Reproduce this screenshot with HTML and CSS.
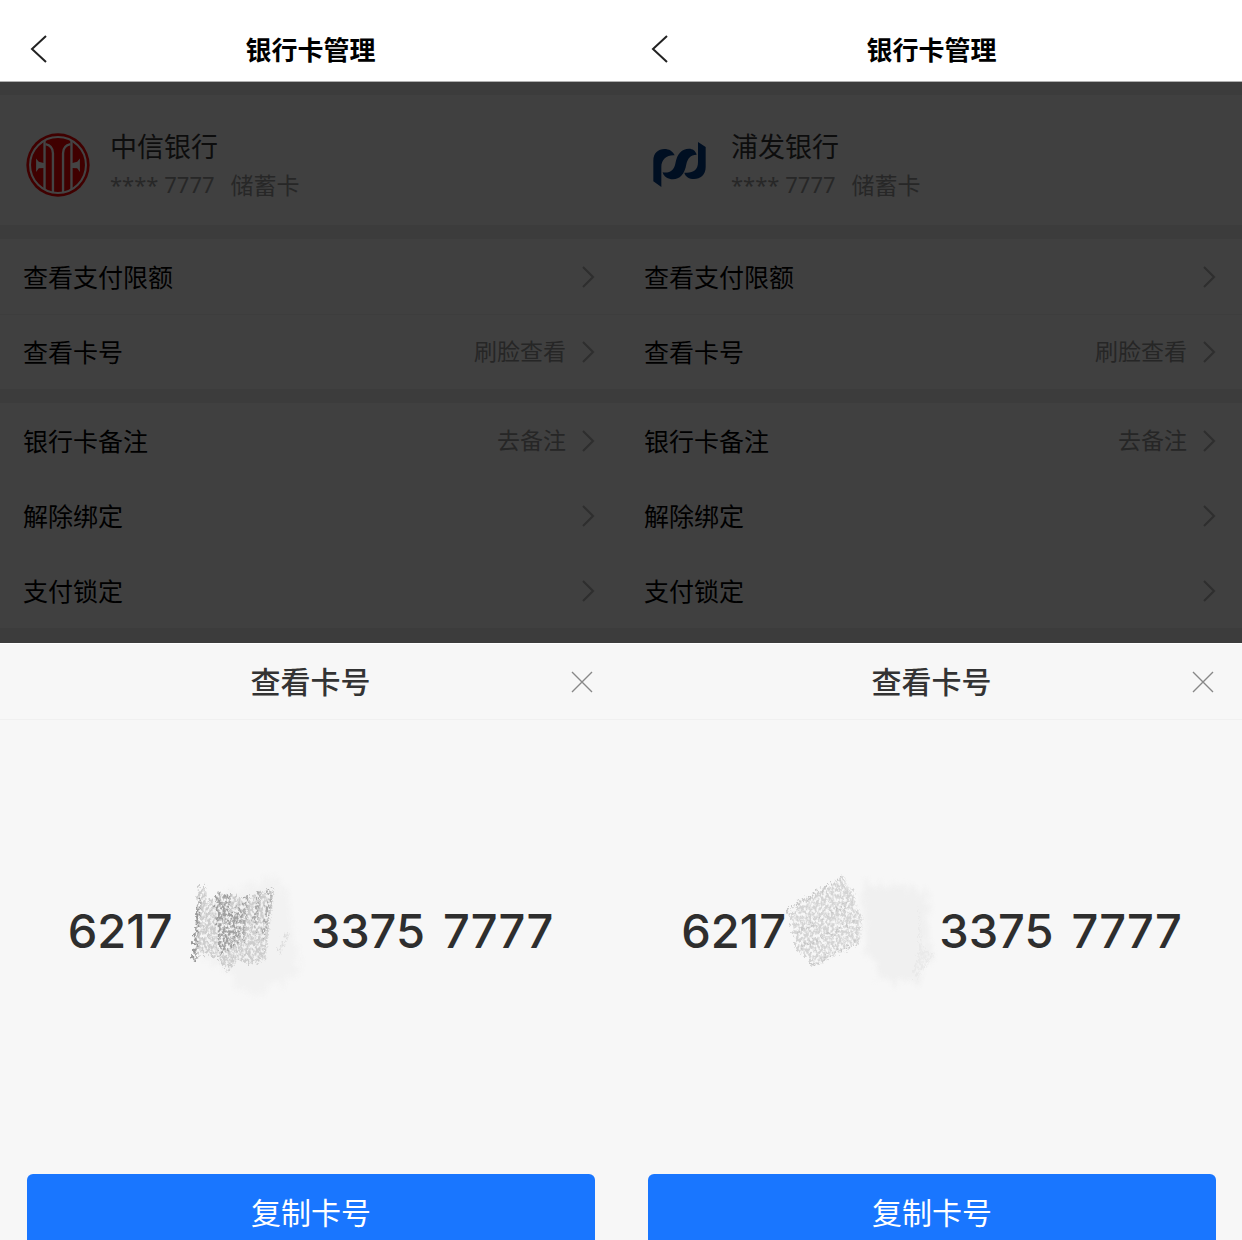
FILE: index.html
```html
<!DOCTYPE html>
<html lang="zh-CN">
<head>
<meta charset="utf-8">
<meta name="viewport" content="width=device-width, initial-scale=1">
<title>银行卡管理</title>
<link rel="stylesheet" href="styles.css">
</head>
<body>
<svg class="defs" aria-hidden="true">
  <defs>
    <filter id="grain" x="0" y="0" width="100%" height="100%" color-interpolation-filters="sRGB">
      <feTurbulence type="fractalNoise" baseFrequency="0.4 0.28" numOctaves="4" seed="7" result="n"/>
      <feColorMatrix in="n" type="matrix" values="0 0 0 0 0  0 0 0 0 0  0 0 0 0 0  4 0 0 0 -1.4" result="m"/>
      <feDisplacementMap in="SourceGraphic" in2="n" scale="12" xChannelSelector="R" yChannelSelector="G" result="d"/>
      <feComposite in="d" in2="m" operator="in" result="c"/>
      <feGaussianBlur in="c" stdDeviation="0.6"/>
    </filter>
    <filter id="smudge" x="-10%" y="-10%" width="120%" height="120%" color-interpolation-filters="sRGB">
      <feTurbulence type="fractalNoise" baseFrequency="0.14 0.05" numOctaves="3" seed="5" result="n"/>
      <feDisplacementMap in="SourceGraphic" in2="n" scale="24" xChannelSelector="R" yChannelSelector="G" result="d"/>
      <feGaussianBlur in="d" stdDeviation="2"/>
    </filter>
    <symbol id="back" viewBox="0 0 18 30"><path d="M16 2 2 15l14 13" fill="none" stroke="currentColor" stroke-width="2"/></symbol>
    <symbol id="chevron" viewBox="0 0 14 24"><path d="M2 2l10 10L2 22" fill="none" stroke="currentColor" stroke-width="2"/></symbol>
    <symbol id="close" viewBox="0 0 22 22"><path d="M1 1l20 20M21 1 1 21" fill="none" stroke="currentColor" stroke-width="1.4"/></symbol>
  </defs>
</svg>
<main class="screens">
  <section class="screen">
    <header class="topbar">
      <button class="icon-button back" type="button" aria-label="返回"><svg width="18" height="30"><use href="#back"/></svg></button>
      <h1 class="title">银行卡管理</h1>
    </header>
    <div class="content">
      <div class="card">
        <span class="logo">
          <svg width="64" height="64" viewBox="0 0 190 190" aria-hidden="true">
            <circle cx="95" cy="95" r="94" fill="#400000"/>
            <circle cx="95" cy="95" r="83" fill="none" stroke="#444" stroke-width="6"/>
            <g fill="none" stroke="#444" stroke-width="7">
              <path d="M55 23v145M135 23v145"/>
              <path d="M58 33c15 3 22 12 22 27v116M132 33c-15 3-22 12-22 27v116"/>
            </g>
            <path d="M30 76l8 9 17 5v14l-17 1-8 11zM160 76l-8 9-17 5v14l17 1 8 11z" fill="#444"/>
          </svg>
        </span>
        <div class="bank">
          <h2 class="bank-name">中信银行</h2>
          <p class="bank-meta"><span class="tail">**** 7777</span><span>储蓄卡</span></p>
        </div>
      </div>
      <nav class="group ruled">
        <a class="row" href="#"><span class="label">查看支付限额</span><svg class="chev" width="14" height="24"><use href="#chevron"/></svg></a>
        <a class="row" href="#"><span class="label">查看卡号</span><span class="value">刷脸查看</span><svg class="chev" width="14" height="24"><use href="#chevron"/></svg></a>
      </nav>
      <nav class="group">
        <a class="row" href="#"><span class="label">银行卡备注</span><span class="value">去备注</span><svg class="chev" width="14" height="24"><use href="#chevron"/></svg></a>
        <a class="row" href="#"><span class="label">解除绑定</span><svg class="chev" width="14" height="24"><use href="#chevron"/></svg></a>
        <a class="row" href="#"><span class="label">支付锁定</span><svg class="chev" width="14" height="24"><use href="#chevron"/></svg></a>
      </nav>
    </div>
    <div class="sheet">
      <div class="sheet-head">
        <h2 class="sheet-title">查看卡号</h2>
        <button class="icon-button close" type="button" aria-label="关闭"><svg width="22" height="22"><use href="#close"/></svg></button>
      </div>
      <p class="number">
        <span>6217</span>
        <svg class="scribble" width="138" height="150" viewBox="-3 0 138 150" aria-hidden="true">
          <path d="M30 50 98 18l14 28 14 70-26 12-18 12-20-8-6-18-30-8z" fill="#f2f2f2" filter="url(#smudge)"/>
          <g filter="url(#grain)">
            <rect width="134" height="150" fill="none"/>
            <path d="M22 30h8l2 18 12-12 12 4 16 2 10-6 16-2-8 70-16 4-12-4-10 12-10-14-12-4-12 4z" fill="#ccc"/>
            <path d="M40 40l16-4-2 22 16-12-6 40-20 16z" fill="#a0a0a0"/>
            <path d="M24 44l-5 62" stroke="#999" stroke-width="5" fill="none"/>
            <path d="M72 40l-4 44M84 34l-4 40M96 32l-7 50" stroke="#aaa" stroke-width="4" fill="none"/>
            <path d="M112 78l-8 18" stroke="#ddd" stroke-width="4"/>
          </g>
        </svg>
        <span>3375</span><span class="last">7777</span>
      </p>
      <div class="actions"><button class="copy" type="button">复制卡号</button></div>
    </div>
  </section>

  <section class="screen">
    <header class="topbar">
      <button class="icon-button back" type="button" aria-label="返回"><svg width="18" height="30"><use href="#back"/></svg></button>
      <h1 class="title">银行卡管理</h1>
    </header>
    <div class="content">
      <div class="card">
        <span class="logo">
          <svg width="53" height="45" viewBox="0 0 157 135" aria-hidden="true">
            <g fill="#000f22">
              <path d="M0 118V56C0 33 15 21 33 21c14 0 25 6 31 19-22-2-40 12-40 34v61z"/>
              <path d="M28 91c22 3 34-6 38-26 5-31 20-45 41-45 11 0 20 6 23 18-19 1-27 11-31 29-5 30-20 45-40 45-14 0-28-7-31-21z"/>
              <path d="M134 0l23 15v60c0 24-16 36-35 36-14 0-26-7-29-19 24 3 41-7 41-31z"/>
            </g>
          </svg>
        </span>
        <div class="bank">
          <h2 class="bank-name">浦发银行</h2>
          <p class="bank-meta"><span class="tail">**** 7777</span><span>储蓄卡</span></p>
        </div>
      </div>
      <nav class="group ruled">
        <a class="row" href="#"><span class="label">查看支付限额</span><svg class="chev" width="14" height="24"><use href="#chevron"/></svg></a>
        <a class="row" href="#"><span class="label">查看卡号</span><span class="value">刷脸查看</span><svg class="chev" width="14" height="24"><use href="#chevron"/></svg></a>
      </nav>
      <nav class="group">
        <a class="row" href="#"><span class="label">银行卡备注</span><span class="value">去备注</span><svg class="chev" width="14" height="24"><use href="#chevron"/></svg></a>
        <a class="row" href="#"><span class="label">解除绑定</span><svg class="chev" width="14" height="24"><use href="#chevron"/></svg></a>
        <a class="row" href="#"><span class="label">支付锁定</span><svg class="chev" width="14" height="24"><use href="#chevron"/></svg></a>
      </nav>
    </div>
    <div class="sheet">
      <div class="sheet-head">
        <h2 class="sheet-title">查看卡号</h2>
        <button class="icon-button close" type="button" aria-label="关闭"><svg width="22" height="22"><use href="#close"/></svg></button>
      </div>
      <p class="number">
        <span>6217</span>
        <svg class="scribble" width="153" height="150" viewBox="-3 0 153 150" aria-hidden="true">
          <path d="M76 24l64 14-4 54 10 6-20 30-34-4-18-34z" fill="#f0f0f0" filter="url(#smudge)"/>
          <g filter="url(#grain)">
            <rect width="148" height="150" fill="none"/>
            <path d="M0 60 26 36 54 20l6 12 6 2 2 20 6 4-2 26L28 110l-8-8-12-8-4-20z" fill="#d4d4d4"/>
            <path d="M22 110 70 86M12 92l56-26M-4 56l58-34M10 76l54-30" stroke="#c8c8c8" stroke-width="3" fill="none"/>
            <path d="M130 48l4 44 12 6-18 26-4-8 6-20z" fill="#e9e9e9"/>
          </g>
        </svg>
        <span>3375</span><span class="last">7777</span>
      </p>
      <div class="actions"><button class="copy" type="button">复制卡号</button></div>
    </div>
  </section>
</main>
</body>
</html>
```
FILE: styles.css
```css
* { box-sizing: border-box; }

body {
  margin: 0;
  background: #f7f7f7;
  font-family: "Noto Sans CJK SC", sans-serif;
}

h1, h2, p { margin: 0; }

svg { display: block; flex: none; }

.defs { position: absolute; width: 0; height: 0; }

.screens {
  display: grid;
  grid-template-columns: 1fr 1fr;
  height: 100vh;
  overflow: hidden;
}

.screen {
  display: flex;
  flex-direction: column;
  min-width: 0;
}

.icon-button {
  display: flex;
  padding: 0;
  border: 0;
  background: none;
  color: inherit;
}

.topbar,
.sheet-head {
  display: grid;
  grid-template-columns: 48px 1fr 48px;
  align-items: center;
}

.topbar {
  height: 82px;
  padding-top: 16px;
  background: #fff;
  border-bottom: 1px solid #b0b0b0;
  color: #222;
}

.back { justify-content: flex-end; }

.title {
  font-size: 26px;
  line-height: 40px;
  font-weight: 700;
  text-align: center;
  color: #000;
}

.content {
  display: flex;
  flex-direction: column;
  gap: 14px;
  padding: 13px 0 15px;
  background: #3c3c3c;
}

.card {
  display: flex;
  align-items: center;
  gap: 20px;
  height: 130px;
  padding: 9px 26px 0;
  background: #404040;
}

.logo {
  display: flex;
  justify-content: center;
  width: 64px;
}

.bank-name {
  font-size: 27px;
  line-height: 38px;
  font-weight: 400;
  color: #0d0d0d;
}

.bank-meta {
  display: flex;
  gap: 16px;
  font-size: 23px;
  line-height: 38px;
  color: #272727;
}

.tail {
  font-family: "Noto Sans", sans-serif;
  font-size: 22px;
}

.group { background: #404040; }

.row {
  display: flex;
  align-items: center;
  gap: 15px;
  height: 75px;
  padding: 0 26px 0 23px;
  color: #000;
  text-decoration: none;
}

.ruled .row + .row { border-top: 1px solid #3d3d3d; }

.label {
  flex: 1;
  padding-bottom: 2px;
  font-size: 25px;
  line-height: 36px;
}

.value {
  padding-bottom: 4px;
  font-size: 23px;
  line-height: 36px;
  color: #262626;
}

.chev { color: #2e2e2e; }

.sheet {
  flex: 1;
  display: flex;
  flex-direction: column;
  background: #f7f7f7;
}

.sheet-head {
  height: 77px;
  border-top: 1px solid #fff;
  border-bottom: 1px solid #f0f0f0;
}

.sheet-title {
  grid-column: 2;
  padding-bottom: 4px;
  font-size: 30px;
  line-height: 44px;
  font-weight: 500;
  text-align: center;
  color: #333;
}

.close {
  padding-right: 28px;
  justify-content: flex-end;
  color: #888;
}

.number {
  flex: 1;
  display: flex;
  align-items: center;
  justify-content: center;
  padding-bottom: 32px;
  font-family: Inter, sans-serif;
  font-size: 47px;
  line-height: 60px;
  font-weight: 500;
  color: #2e2e2e;
}

.last { margin-left: 18px; }

.actions { padding: 0 26px 0 27px; }

.copy {
  display: block;
  width: 100%;
  height: 78px;
  margin-bottom: -12px;
  padding: 0 0 4px;
  border: 0;
  border-radius: 6px;
  background: #1976ff;
  font-family: inherit;
  font-size: 30px;
  color: #fff;
}
```
